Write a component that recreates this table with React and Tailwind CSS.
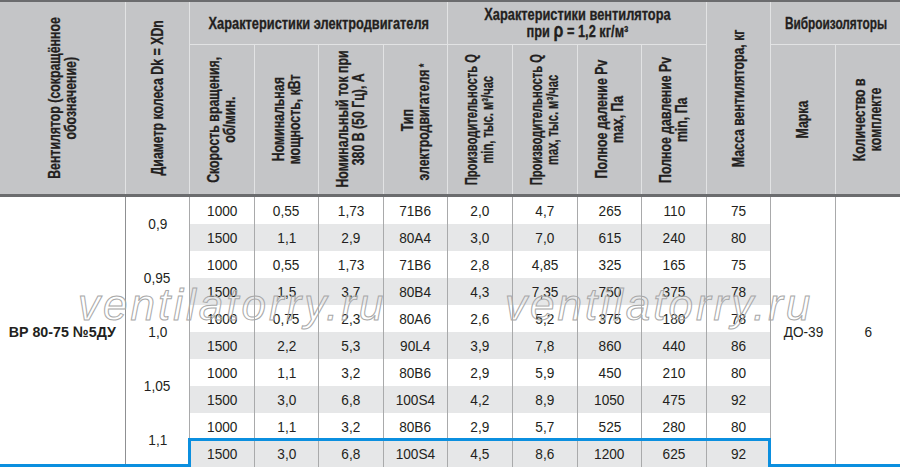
import React from "react";

const rows = [
  ["1000", "0,55", "1,73", "71B6", "2,0", "4,7", "265", "110", "75"],
  ["1500", "1,1", "2,9", "80A4", "3,0", "7,0", "615", "240", "80"],
  ["1000", "0,55", "1,73", "71B6", "2,8", "4,85", "325", "165", "75"],
  ["1500", "1,5", "3,7", "80B4", "4,3", "7,35", "750", "375", "78"],
  ["1000", "0,75", "2,3", "80A6", "2,6", "5,2", "375", "180", "78"],
  ["1500", "2,2", "5,3", "90L4", "3,9", "7,8", "860", "440", "86"],
  ["1000", "1,1", "3,2", "80B6", "2,9", "5,9", "450", "210", "80"],
  ["1500", "3,0", "6,8", "100S4", "4,2", "8,9", "1050", "475", "92"],
  ["1000", "1,1", "3,2", "80B6", "2,9", "5,7", "525", "280", "80"],
  ["1500", "3,0", "6,8", "100S4", "4,5", "8,6", "1200", "625", "92"],
];

const diam = ["0,9", "0,95", "1,0", "1,05", "1,1"];

function V({ children, tight }) {
  return (
    <div
      className={
        "[writing-mode:vertical-rl] rotate-180 whitespace-nowrap text-center leading-[16px] text-[16px] font-bold [-webkit-text-stroke:0.3px_#231f20] " +
        (tight ? "scale-y-[0.7]" : "scale-y-[0.77]")
      }
    >
      {children}
    </div>
  );
}

function HCell({ className = "", children }) {
  return (
    <div className={"flex items-center justify-center overflow-visible " + className}>{children}</div>
  );
}

function H({ children, narrow }) {
  return (
    <span
      className={
        "inline-block whitespace-nowrap text-[16px] font-bold text-center leading-[17px] [-webkit-text-stroke:0.3px_#231f20] " +
        (narrow ? "scale-x-[0.74]" : "scale-x-[0.8]")
      }
    >
      {children}
    </span>
  );
}

function T({ children, bold }) {
  return (
    <span className={"inline-block whitespace-nowrap " + (bold ? "font-bold scale-x-[0.92]" : "scale-x-[0.88]")}>
      {children}
    </span>
  );
}

export default function App() {
  return (
    <div className="relative w-[900px] h-[467px] overflow-hidden bg-white text-[#231f20] font-['Liberation_Sans',Arial,sans-serif]">
      {/* Header */}
      <div className="grid grid-cols-[126px_64px_65px_64px_65px_64px_65px_65px_64px_65px_64px_65px_64px] grid-rows-[42px_150px] bg-[#c4c5c7] border-t-2 border-b-[3px] border-[#6b6c6e]">
        <HCell className="row-span-2 border-r border-[#e2e3e4]">
          <V>
            Вентилятор (сокращённое
            <br />
            обозначение)
          </V>
        </HCell>
        <HCell className="row-span-2 border-r border-[#e2e3e4]">
          <V>Диаметр колеса Dk = XDn</V>
        </HCell>
        <HCell className="col-span-4 border-r border-[#e2e3e4]">
          <H>Характеристики электродвигателя</H>
        </HCell>
        <HCell className="col-span-4 border-r border-[#e2e3e4]">
          <H>
            Характеристики вентилятора
            <br />
            при <span className="text-[20px] leading-[10px]">ρ</span> = 1,2 кг/м³
          </H>
        </HCell>
        <HCell className="row-span-2 border-r border-[#e2e3e4]">
          <V>Масса вентилятора, кг</V>
        </HCell>
        <HCell className="col-span-2">
          <H narrow>Виброизоляторы</H>
        </HCell>

        <HCell className="border-t border-r border-[#e2e3e4]">
          <V>
            Скорость вращения,
            <br />
            об/мин.
          </V>
        </HCell>
        <HCell className="border-t border-r border-[#e2e3e4]">
          <V>
            Номинальная
            <br />
            мощность, кВт
          </V>
        </HCell>
        <HCell className="border-t border-r border-[#e2e3e4]">
          <V>
            Номинальный ток при
            <br />
            380 В (50 Гц), А
          </V>
        </HCell>
        <HCell className="border-t border-r border-[#e2e3e4]">
          <V>
            Тип
            <br />
            электродвигателя&nbsp;&nbsp;<sup>*</sup>
          </V>
        </HCell>
        <HCell className="border-t border-r border-[#e2e3e4]">
          <V tight>
            Производительность Q
            <br />
            min, тыс. м³/час
          </V>
        </HCell>
        <HCell className="border-t border-r border-[#e2e3e4]">
          <V tight>
            Производительность Q
            <br />
            max, тыс. м³/час
          </V>
        </HCell>
        <HCell className="border-t border-r border-[#e2e3e4]">
          <V>
            Полное даление Pv
            <br />
            max, Па
          </V>
        </HCell>
        <HCell className="border-t border-r border-[#e2e3e4]">
          <V>
            Полное давление Pv
            <br />
            min, Па
          </V>
        </HCell>
        <HCell className="border-t border-r border-[#e2e3e4]">
          <V>Марка</V>
        </HCell>
        <HCell className="border-t border-[#e2e3e4]">
          <V>
            Количество в
            <br />
            комплекте
          </V>
        </HCell>
      </div>

      {/* Body */}
      <div className="flex h-[270px] text-[15.5px]">
        <div className="w-[126px] shrink-0 border-r border-[#8f9092] flex items-center justify-center">
          <T bold>ВР 80-75 №5ДУ</T>
        </div>
        <div className="w-[64px] shrink-0 border-r border-[#a9aaab] flex flex-col">
          {diam.map((d) => (
            <div key={d} className="h-[54px] flex items-center justify-center">
              <T>{d}</T>
            </div>
          ))}
        </div>
        <div className="w-[581px] shrink-0 flex flex-col">
          {rows.map((r, i) => (
            <div
              key={i}
              className={
                "grid grid-cols-[65px_64px_65px_64px_65px_65px_64px_65px_64px] h-[27px] " +
                (i % 2 ? "bg-[#e6e7e8]" : "bg-white")
              }
            >
              {r.map((v, j) => (
                <div key={j} className="border-r border-[#a9aaab] flex items-center justify-center">
                  <T>{v}</T>
                </div>
              ))}
            </div>
          ))}
        </div>
        <div className="w-[65px] shrink-0 border-r border-[#a9aaab] flex items-center justify-center">
          <T>ДО-39</T>
        </div>
        <div className="w-[64px] shrink-0 flex items-center justify-center">
          <T>6</T>
        </div>
      </div>

      {/* Watermark */}
      <div className="pointer-events-none absolute left-[78px] top-[283px] text-[44px] italic tracking-[3px] leading-none text-transparent [-webkit-text-stroke:1px_#a8a8a8]">
        ventilatorry.ru
      </div>
      <div className="pointer-events-none absolute left-[505px] top-[283px] text-[44px] italic tracking-[3px] leading-none text-transparent [-webkit-text-stroke:1px_#a8a8a8]">
        ventilatorry.ru
      </div>

      {/* Highlight */}
      <div className="pointer-events-none absolute left-[188px] top-[438px] w-[583px] h-[29px] border-t-[3px] border-x-[3px] border-[#0b8fdf]" />
      <div className="pointer-events-none absolute left-0 top-[464px] w-[191px] h-[3px] bg-[#0b8fdf]" />
      <div className="pointer-events-none absolute left-[768px] top-[464px] w-[132px] h-[3px] bg-[#0b8fdf]" />
    </div>
  );
}
